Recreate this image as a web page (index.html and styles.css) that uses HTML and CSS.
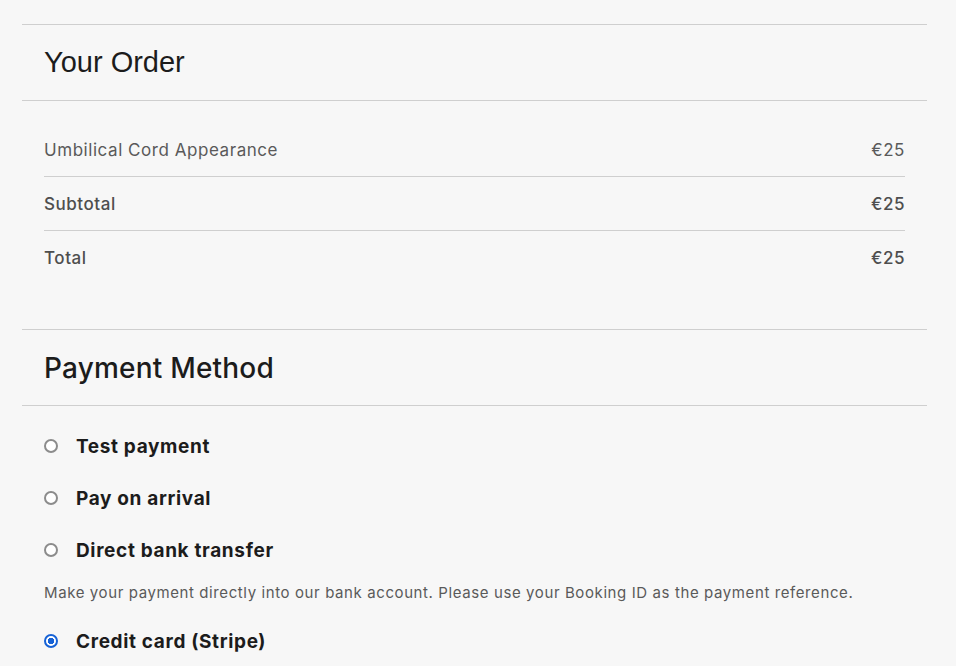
FILE: index.html
```html
<!DOCTYPE html>
<html>
<head>
<meta charset="utf-8">
<link rel="stylesheet" href="styles.css">
</head>
<body>
<div class="page">
  <section class="block">
    <h2 class="block-title title-order">Your Order</h2>
    <div class="order-rows">
      <div class="order-row item"><span>Umbilical Cord Appearance</span><span>€25</span></div>
      <div class="order-row strong"><span>Subtotal</span><span>€25</span></div>
      <div class="order-row strong"><span>Total</span><span>€25</span></div>
    </div>
  </section>
  <section class="block payment">
    <h2 class="block-title">Payment Method</h2>
    <ul class="methods">
      <li class="method"><span class="radio"></span><span class="method-label">Test payment</span></li>
      <li class="method"><span class="radio"></span><span class="method-label">Pay on arrival</span></li>
      <li class="method"><span class="radio"></span><span class="method-label">Direct bank transfer</span></li>
      <li class="method-desc">Make your payment directly into our bank account. Please use your Booking ID as the payment reference.</li>
      <li class="method"><span class="radio checked"></span><span class="method-label">Credit card (Stripe)</span></li>
    </ul>
  </section>
</div>
</body>
</html>
```
FILE: styles.css
```css
html, body {
  margin: 0;
  padding: 0;
  background: #f7f7f7;
}
body {
  font-family: Inter, "Noto Sans", sans-serif;
  color: #1c1c1c;
}
.page {
  padding: 24px 29px 0 22px;
}
.block {
  border-top: 1px solid #cfcfcf;
}
.block-title {
  margin: 0;
  height: 76px;
  box-sizing: border-box;
  border-bottom: 1px solid #cfcfcf;
  padding: 0 22px;
  display: flex;
  align-items: center;
  font-weight: 500;
  font-size: 28px;
  letter-spacing: 0.2px;
  color: #1c1c1c;
}
.title-order {
  font-family: "Liberation Sans", Arial, sans-serif;
  font-weight: 400;
  font-size: 29px;
  letter-spacing: 0;
}
.order-rows {
  padding: 23px 22px 44px;
}
.order-row {
  display: flex;
  justify-content: space-between;
  align-items: center;
  height: 54px;
  box-sizing: border-box;
  border-bottom: 1px solid #cfcfcf;
  font-size: 17px;
  letter-spacing: 0.55px;
  color: #5a5a5a;
}
.order-row:last-child {
  border-bottom: none;
}
.order-row.item {
  height: 53px;
}
.order-row.strong {
  font-weight: 500;
  color: #4e4e4e;
}
.methods {
  list-style: none;
  margin: 0;
  padding: 14px 22px 0;
}
.method {
  display: flex;
  align-items: center;
  height: 52px;
  gap: 18px;
}
.radio {
  width: 14px;
  height: 14px;
  border: 2px solid #8c8c8c;
  border-radius: 50%;
  box-sizing: border-box;
  background: #fff;
  flex: none;
}
.radio.checked {
  border: 2px solid #1662d6;
  background: radial-gradient(circle, #1662d6 0 3px, #fff 3.5px);
}
.method-label {
  font-weight: 700;
  font-size: 19px;
  letter-spacing: 0.65px;
  color: #1c1c1c;
}
.method-desc {
  font-size: 15px;
  letter-spacing: 0.6px;
  color: #5a5a5a;
  height: 32px;
  display: flex;
  align-items: center;
  margin-bottom: 7px;
}
```
